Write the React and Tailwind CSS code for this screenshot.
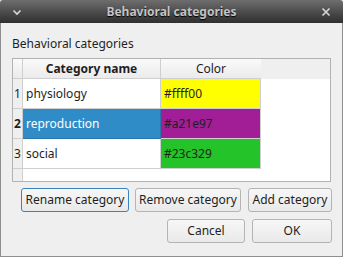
import React, { useState } from "react";

const rows = [
  { id: 1, name: "physiology", color: "#ffff00" },
  { id: 2, name: "reproduction", color: "#a21e97" },
  { id: 3, name: "social", color: "#23c329" },
];

const colorBg = {
  "#ffff00": "bg-[#ffff00]",
  "#a21e97": "bg-[#a21e97]",
  "#23c329": "bg-[#23c329]",
};

const Button = ({ children, focused, className = "" }) => (
  <button
    className={`h-[24px] whitespace-nowrap rounded-[3px] border bg-gradient-to-b from-[#f7f7f7] to-[#e9e9e9] text-[12px] leading-none text-[#1e1e1e] ${
      focused ? "border-[#3a84bd]" : "border-[#b4b4b4]"
    } ${className}`}
  >
    {children}
  </button>
);

const App = () => {
  const [selected, setSelected] = useState(2);

  return (
    <div className="w-[343px] h-[257px] flex flex-col bg-[#efefef] font-['Noto_Sans',sans-serif] overflow-hidden">
      {/* title bar */}
      <div className="h-[23px] flex items-center justify-between px-[12px] rounded-t-[3px] bg-gradient-to-b from-[#6e6e6e] to-[#2f2f2f]">
        <svg width="10" height="8" viewBox="0 0 10 8">
          <path d="M1.5 2.5 L5 6 L8.5 2.5" stroke="#d8d8d8" strokeWidth="1.6" fill="none" />
        </svg>
        <span className="text-[12px] font-bold text-[#c4c4c4] [text-shadow:0_1px_1px_#000] leading-none">
          Behavioral categories
        </span>
        <svg width="10" height="10" viewBox="0 0 10 10">
          <path d="M1.5 1.5 L8.5 8.5 M8.5 1.5 L1.5 8.5" stroke="#d8d8d8" strokeWidth="1.6" fill="none" />
        </svg>
      </div>

      {/* body */}
      <div className="flex-1 flex flex-col border-x border-b border-[#8e8e8e] pl-[11px] pr-[10px]">
        <div className="h-[35px] pt-[12px] text-[12px] text-[#1e1e1e] leading-[18px]">Behavioral categories</div>

        {/* table */}
        <div className="w-[319px] h-[124px] border border-[#b2b2b2] bg-white flex flex-col text-[12px] text-[#1e1e1e]">
          <div className="h-[20px] flex shrink-0">
            <div className="w-[10px] bg-gradient-to-b from-[#fafafa] to-[#ebebeb] border-r border-b border-[#cfcfcf]" />
            <div className="w-[138px] flex items-center justify-center font-bold bg-gradient-to-b from-[#fafafa] to-[#ebebeb] border-r border-b border-[#cfcfcf]">
              Category name
            </div>
            <div className="w-[100px] flex items-center justify-center bg-gradient-to-b from-[#fafafa] to-[#ebebeb] border-b border-[#cfcfcf]">
              Color
            </div>
            <div className="flex-1 bg-[#efefef]" />
          </div>

          {rows.map((r) => {
            const sel = selected === r.id;
            return (
              <div key={r.id} className="h-[30px] flex shrink-0" onClick={() => setSelected(r.id)}>
                <div
                  className={`w-[10px] flex items-center justify-center bg-[#efefef] border-r border-b border-[#cfcfcf] ${
                    sel ? "font-bold" : ""
                  }`}
                >
                  {r.id}
                </div>
                <div
                  className={`w-[138px] flex items-center pl-[3px] border-r border-b ${
                    sel ? "bg-[#308cc6] text-white border-[#2a76a8]" : "border-[#cfcfcf]"
                  }`}
                >
                  {r.name}
                </div>
                <div className={`w-[100px] flex items-center pl-[3px] border-r border-b border-[#cfcfcf] ${colorBg[r.color]}`}>
                  {r.color}
                </div>
                <div className="flex-1" />
              </div>
            );
          })}

          <div className="flex-1 flex">
            <div className="w-[10px] bg-[#efefef] border-r border-[#cfcfcf]" />
          </div>
        </div>

        <div className="mt-[6px] flex justify-end w-[320px]">
          <Button focused className="w-[108px]">Rename category</Button>
          <Button className="w-[106px] ml-[6px]">Remove category</Button>
          <Button className="w-[84px] ml-[7px]">Add category</Button>
        </div>

        <div className="mt-[7px] flex justify-end gap-[7px] w-[320px]">
          <Button className="w-[78px]">Cancel</Button>
          <Button className="w-[80px]">OK</Button>
        </div>
      </div>
    </div>
  );
};

export default App;
